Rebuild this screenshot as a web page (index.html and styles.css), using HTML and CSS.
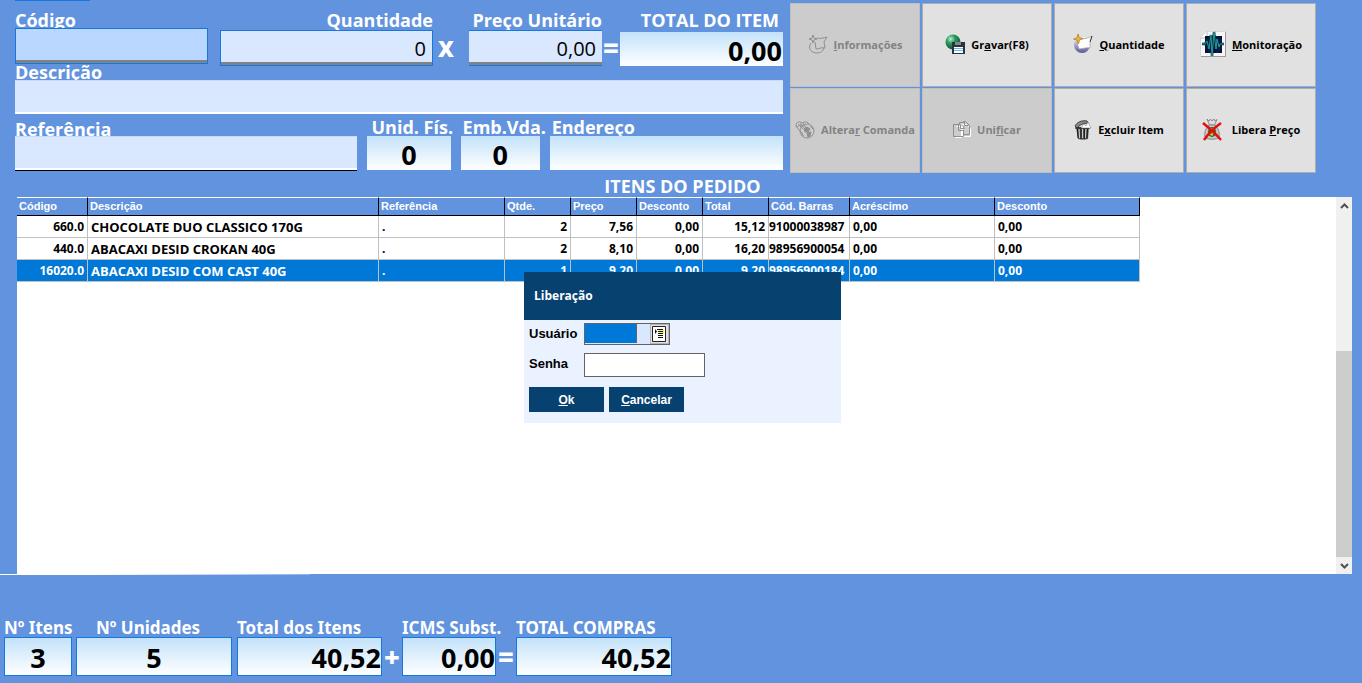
FILE: index.html
```html
<!DOCTYPE html>
<html lang="pt-BR">
<head>
<meta charset="utf-8">
<title>Itens do Pedido</title>
<link rel="stylesheet" href="styles.css">
</head>
<body>
<div class="app">
  <header class="top">
    <form class="entry">
      <div class="row row-values">
        <div class="field">
          <label class="label label-short" for="codigo">Código</label>
          <input class="box box-edit box-active" id="codigo" type="text">
        </div>
        <div class="field push">
          <label class="label label-end" for="qtd">Quantidade</label>
          <input class="box box-edit" id="qtd" type="text" value="0">
        </div>
        <span class="sign">X</span>
        <div class="field">
          <label class="label label-end" for="preco">Preço Unitário</label>
          <input class="box box-edit box-open" id="preco" type="text" value="0,00">
        </div>
        <span class="sign sign-eq">=</span>
        <div class="field">
          <label class="label label-tall label-end label-inset" for="total-item">TOTAL DO ITEM</label>
          <input class="box box-total" id="total-item" type="text" value="0,00" readonly>
        </div>
      </div>
      <div class="field">
        <label class="label label-tight" for="descricao">Descrição</label>
        <input class="box box-plain" id="descricao" type="text">
      </div>
      <div class="row row-info">
        <div class="field">
          <label class="label label-info label-low" for="referencia">Referência</label>
          <input class="box box-plain box-shadow" id="referencia" type="text">
        </div>
        <div class="field">
          <label class="label label-info label-start" for="unid">Unid. Fís.</label>
          <input class="box box-total box-center" id="unid" type="text" value="0" readonly>
        </div>
        <div class="field">
          <label class="label label-info" for="emb">Emb.Vda.</label>
          <input class="box box-total box-center" id="emb" type="text" value="0" readonly>
        </div>
        <div class="field">
          <label class="label label-info" for="endereco">Endereço</label>
          <input class="box box-total" id="endereco" type="text" readonly>
        </div>
      </div>
    </form>
    <div class="tools">
      <button class="tool" type="button" disabled>
        <svg class="icon" width="20" height="20" viewBox="0 0 20 20" fill="none" stroke="#8f8f8f"><path d="M5 1l1 3 3 1-3 1-1 3-1-3-3-1 3-1zM9 4c3 1 6 0 10-1l-3 5 1 6c-4-1-6 1-9 1L7 8M3 9c-4 6 1 10 6 10 4 0 6-2 7-5"/></svg>
        <span><u>I</u>nformações</span>
      </button>
      <button class="tool" type="button">
        <svg class="icon" width="20" height="20" viewBox="0 0 20 20"><defs><radialGradient id="globe" cx=".35" cy=".3" r=".7"><stop offset="0" stop-color="#b9f3cf"/><stop offset=".4" stop-color="#2f9a62"/><stop offset="1" stop-color="#0a5a32"/></radialGradient></defs><circle cx="8" cy="8" r="7.5" fill="url(#globe)"/><path d="M7 8h13v12H7z" fill="#2b333d"/><path d="M10 8h6v3h-6z" fill="#7b8794"/><path d="M9 13h9v6H9z" fill="#fff"/><path d="M9 14.500h9M9 16.500h9" stroke="#6fb5e8"/></svg>
        <span>Gr<u>a</u>var(F8)</span>
      </button>
      <button class="tool" type="button">
        <svg class="icon" width="20" height="20" viewBox="0 0 20 20"><defs><linearGradient id="orb" x1="0" x2="0" y1="0" y2="1"><stop offset="0" stop-color="#f4f4ff"/><stop offset="1" stop-color="#5a5894"/></linearGradient></defs><circle cx="9" cy="11" r="8" fill="url(#orb)"/><path d="M6 5c4 0 8 0 13-3l-2 6 0 6c-4-1-7 1-11 1L4 9z" fill="#fff" stroke="#8b8b9c" stroke-width=".6"/><path d="M19 2l-2 6" stroke="#333"/><path d="M5 0l1.300 3.500L10 4.500 6.500 6 5.500 10 4 6.300.500 5 4 3.700z" fill="#f1b632" stroke="#a8781c" stroke-width=".7"/></svg>
        <span><u>Q</u>uantidade</span>
      </button>
      <button class="tool" type="button">
        <svg class="icon" width="26" height="26" viewBox="0 0 26 26"><path d="M7 .500h18.500v25H.500V7z" fill="#f6f6f6" stroke="#d6d6d6"/><path d="M.500 7H7V.500" fill="#fff" stroke="#bbb"/><path d="M25.500 1v24.500H1" fill="none" stroke="#9a9a9a"/><path d="M5 5h17v17H5z" fill="#07113f"/><path d="M5 9h17M5 13h17M5 17h17M9 5v17M13 5v17M17 5v17" stroke="#1c2c68" stroke-width=".5"/><path d="M2 13h3l2-3 2 8 2-14 1 21 2-24 2 17 1-10 2 8 1-3h4" fill="none" stroke="#0b2a33" stroke-width="2.500"/><path d="M2 13h3l2-3 2 8 2-14 1 21 2-24 2 17 1-10 2 8 1-3h4" fill="none" stroke="#1f9aa3" stroke-width="1"/></svg>
        <span><u>M</u>onitoração</span>
      </button>
      <button class="tool" type="button" disabled>
        <svg class="icon" width="20" height="18" viewBox="0 0 20 18" fill="none" stroke="#8f8f8f"><circle cx="12" cy="10" r="7"/><path d="M1 4c0-3 4-4 6-2 3-2 6-1 7 1M1 4c0 3 3 4 4 6l3 3M3 3l5 5M5 2l5 6M8 2l3 5M2 6c2-2 4-2 6-1"/><path d="M9 8l3-2 3 2-2 3-3 0zM12 12l4-1-1 4-2 1zM15 5l3 3M6 13l3 2" fill="#8f8f8f"/></svg>
        <span>Altera<u>r</u> Comanda</span>
      </button>
      <button class="tool" type="button" disabled>
        <svg class="icon" width="18" height="17" viewBox="0 0 18 17" fill="none"><path d="M2.500 4.500h5v11h-6M8.500 2.500h4l4 4v8h-8z" stroke="#fff" transform="translate(1 1)"/><path d="M.500 3.500h6v-2h4v-1h2l4 4v9h-6v2h-10zM5.500 3.500v6h5M7.500 3.500v4h4l-2-3M11.500.500v4h4M10.500 9v5" stroke="#8f8f8f"/></svg>
        <span>Uni<u>f</u>icar</span>
      </button>
      <button class="tool" type="button">
        <svg class="icon" width="18" height="20" viewBox="0 0 18 20"><path d="M2 7h13l-1 12c-3 1-7 1-10 0z" fill="#555"/><path d="M5 9l.600 9M8.500 9v9M12 9l-.600 9" stroke="#ccc" stroke-width="1.200"/><path d="M3.500 9l.600 9M7 9v10M10.300 9v10M13.500 9l-.600 9" stroke="#111"/><path d="M1 8h15" stroke="#222" stroke-width="1.200"/><path d="M1 6C3 2 8 0 13 1l1 2C10 3 5 5 3 8z" fill="#8a8a8a" stroke="#222" stroke-width=".8"/><path d="M7 8l3-4 2 2 2-4 3 6z" fill="#fff" stroke="#777" stroke-width=".5"/></svg>
        <span>E<u>x</u>cluir Item</span>
      </button>
      <button class="tool tool-wide" type="button">
        <svg class="icon" width="20" height="22" viewBox="0 0 20 22"><path d="M5 0l2 2 1.500-2L10 2l2-2 1 2 2-1.500L12.500 6h-5z" fill="#ddd" stroke="#777" stroke-width=".8"/><path d="M7 6h6c3 3 5 7 4 12-1 3-13 3-14 0C2 13 4 9 7 6z" fill="#c3c6c3" stroke="#888"/><ellipse cx="10" cy="13" rx="4" ry="5" fill="#2d6c2b"/><path d="M11.500 10.500c-3-1-4 1.500-1.500 2.500s1 3.500-2 2.500M10 9v8" stroke="#d8e43a" fill="none"/><path d="M1 4c5 4 12 10 18 17M19 4C12 9 6 15 2 21" stroke="#e80c0c" stroke-width="2.400" fill="none"/></svg>
        <span>Libera <u>P</u>reço</span>
      </button>
    </div>
  </header>

  <h1 class="title">ITENS DO PEDIDO</h1>

  <main class="list">
    <div class="list-body">
      <table class="items">
        <colgroup><col class="c-cod"><col class="c-desc"><col class="c-ref"><col class="c-num"><col class="c-num"><col class="c-num"><col class="c-num"><col class="c-bar"><col class="c-ext"><col class="c-ext"></colgroup>
        <thead>
          <tr><th>Código</th><th>Descrição</th><th>Referência</th><th>Qtde.</th><th>Preço</th><th>Desconto</th><th>Total</th><th>Cód. Barras</th><th>Acréscimo</th><th>Desconto</th></tr>
        </thead>
        <tbody>
          <tr><td class="num">660.0</td><td class="name">CHOCOLATE DUO CLASSICO 170G</td><td>.</td><td class="num">2</td><td class="num">7,56</td><td class="num">0,00</td><td class="num">15,12</td><td class="bar">91000038987</td><td>0,00</td><td>0,00</td></tr>
          <tr><td class="num">440.0</td><td class="name">ABACAXI DESID CROKAN 40G</td><td>.</td><td class="num">2</td><td class="num">8,10</td><td class="num">0,00</td><td class="num">16,20</td><td class="bar">98956900054</td><td>0,00</td><td>0,00</td></tr>
          <tr class="selected"><td class="num">16020.0</td><td class="name">ABACAXI DESID COM CAST 40G</td><td>.</td><td class="num">1</td><td class="num">9,20</td><td class="num">0,00</td><td class="num">9,20</td><td class="bar">98956900184</td><td>0,00</td><td>0,00</td></tr>
        </tbody>
      </table>
    </div>
    <div class="scroll">
      <button class="scroll-btn" type="button" aria-label="Subir"><svg width="9" height="6" viewBox="0 0 9 6" fill="none" stroke="#505050" stroke-width="2"><path d="M1 5l3.500-3.500L8 5"/></svg></button>
      <div class="scroll-track"><div class="scroll-thumb"></div></div>
      <button class="scroll-btn" type="button" aria-label="Descer"><svg width="9" height="6" viewBox="0 0 9 6" fill="none" stroke="#505050" stroke-width="2"><path d="M1 1l3.500 3.500L8 1"/></svg></button>
    </div>
  </main>

  <footer class="totals">
    <div class="sum sum-s">
      <label class="sum-label" for="n-itens">Nº Itens</label>
      <input class="sum-box box-center" id="n-itens" type="text" value="3" readonly>
    </div>
    <div class="sum sum-l">
      <label class="sum-label sum-label-mid" for="n-unid">Nº Unidades</label>
      <input class="sum-box box-center" id="n-unid" type="text" value="5" readonly>
    </div>
    <div class="sum sum-m">
      <label class="sum-label" for="t-itens">Total dos Itens</label>
      <input class="sum-box" id="t-itens" type="text" value="40,52" readonly>
    </div>
    <span class="sum-sign">+</span>
    <div class="sum sum-n">
      <label class="sum-label" for="icms">ICMS Subst.</label>
      <input class="sum-box" id="icms" type="text" value="0,00" readonly>
    </div>
    <span class="sum-sign">=</span>
    <div class="sum sum-l">
      <label class="sum-label" for="t-compras">TOTAL COMPRAS</label>
      <input class="sum-box" id="t-compras" type="text" value="40,52" readonly>
    </div>
  </footer>

  <form class="dialog" role="dialog" aria-labelledby="dlg-title">
    <h2 class="dialog-title" id="dlg-title">Liberação</h2>
    <div class="dialog-body">
      <div class="dialog-row">
        <label class="dialog-label" for="usuario">Usuário</label>
        <div class="picker">
          <input class="picker-input" id="usuario" type="text">
          <button class="picker-btn" type="button" aria-label="Procurar usuário"><svg width="15" height="17" viewBox="0 0 15 17"><path d="M.500.500h13v15H.500z" fill="#fff" stroke="#222"/><path d="M7 3h5v5H7z" fill="#fff36a"/><path d="M5 3.500h6M6 5.500h5M6 7.500h5M6 9.500h5M6 11.500h5" stroke="#111"/><path d="M3 3v5l2-2.500z" fill="#111"/></svg></button>
        </div>
      </div>
      <div class="dialog-row">
        <label class="dialog-label" for="senha">Senha</label>
        <input class="password" id="senha" type="password">
      </div>
      <div class="dialog-actions">
        <button class="action" type="button"><u>O</u>k</button>
        <button class="action" type="button"><u>C</u>ancelar</button>
      </div>
    </div>
  </form>
</div>
</body>
</html>
```
FILE: styles.css
```css
* { box-sizing: border-box; }

body {
  margin: 0;
  background: #6293de;
  color: #000;
  font-family: "Open Sans", "Noto Sans", sans-serif;
}

input, button { font: inherit; margin: 0; border-radius: 0; }
input { min-width: 0; width: 100%; outline: none; }

.app {
  position: relative;
  display: flex;
  flex-direction: column;
  min-height: 100vh;
}

/* entry fields */
.top {
  display: flex;
  gap: 7px;
  padding: 0 46px 0 15px;
}
.top::before {
  content: "";
  position: absolute;
  top: 0;
  left: 15px;
  width: 75px;
  height: 1px;
  background: #1478e0;
}
.entry { flex: 1; min-width: 0; padding-top: 10px; }
.row { display: grid; align-items: start; }
.row-values {
  grid-template-columns: minmax(0, 193fr) minmax(0, 225fr) 36px minmax(0, 133fr) 18px minmax(0, 163fr);
}
.push { padding-left: 12px; }
.row-info {
  grid-template-columns: minmax(0, 342fr) minmax(0, 83fr) minmax(0, 79fr) minmax(0, 233fr);
  column-gap: 10px;
}
.field { display: flex; flex-direction: column; min-width: 0; }
.label {
  height: 20px;
  color: #fff;
  font-size: 18px;
  font-weight: 700;
  line-height: 20px;
  white-space: nowrap;
}
.label-short { height: 18px; }
.label-tall { height: 22px; }
.label-tight { height: 14px; line-height: 12px; }
.label-end { text-align: right; }
.label-inset { padding-right: 4px; }
.label-info { height: 22px; line-height: 26px; padding-left: 2px; }
.label-low { line-height: 31px; padding-left: 0; }
.label-start { padding-left: 4px; }

.box { height: 36px; border: 0; padding: 0 6px; }
.box-edit {
  border: 1px solid #1478e0;
  background: linear-gradient(to top, #7d8488 3px, #d9e7ff 3px);
  font-size: 20px;
  text-align: right;
}
.box-active { background: linear-gradient(to top, #7d8488 3px, #b9d7ff 3px); }
.box-open { border-left: 0; border-right: 0; }
.box-plain {
  height: 34px;
  background: #d9e7ff;
  border-top: 1px solid #c3dcf8;
  border-bottom: 2px solid #fff;
}
.box-shadow { box-shadow: 0 1px 0 #000; }
.box-total {
  height: 34px;
  padding: 2px 1px 0;
  background: linear-gradient(#c3e2fa, #fff);
  font-size: 27px;
  font-weight: 700;
  text-align: right;
}
.box-total.box-center, .sum-box.box-center { text-align: center; }

.sign {
  padding: 24px 10px 0 0;
  color: #fff;
  font-size: 22px;
  font-weight: 800;
  line-height: 28px;
  text-align: center;
}
.sign-eq { padding-right: 0; font-size: 27px; }

/* tool buttons */
.tools {
  display: grid;
  grid-template-columns: repeat(4, 130px);
  grid-template-rows: 84px 85px;
  gap: 1px 2px;
  padding-top: 3px;
}
.tool {
  display: flex;
  align-items: center;
  justify-content: center;
  gap: 6px;
  padding: 0 0 2px;
  border: 1px solid #adadad;
  background: #e1e1e1;
  color: #000;
  font-size: 11px;
  font-weight: 700;
  white-space: nowrap;
}
.tool:disabled { background: #ccc; border-color: #bfbfbf; color: #838383; }
.tool-wide { gap: 10px; }
.icon { flex: none; }

/* item list */
.title {
  margin: 0;
  padding: 3px 0 0 3px;
  color: #fff;
  font-size: 18px;
  font-weight: 700;
  line-height: 21px;
  text-align: center;
}
.list {
  flex: 1;
  display: flex;
  margin: 0 10px 0 17px;
  background: #fff;
}
.list-body { flex: 1; min-width: 0; overflow: hidden; }
.items {
  width: 1123px;
  border-collapse: separate;
  border-spacing: 0;
  table-layout: fixed;
  font-size: 12px;
  font-weight: 700;
}
.c-cod { width: 71px; }
.c-desc { width: 291px; }
.c-ref { width: 126px; }
.c-num { width: 66px; }
.c-bar { width: 81px; }
.c-ext { width: 145px; }
.items th {
  height: 19px;
  padding: 0 2px;
  border-top: 1px solid #fff;
  border-right: 1px solid #000;
  border-bottom: 1px solid #000;
  background: #6293de;
  color: #fff;
  font-family: "Liberation Sans", Arial, sans-serif;
  font-size: 11px;
  line-height: 17px;
  text-align: left;
}
.items td {
  height: 22px;
  padding: 1px 3px 0;
  border-right: 1px solid #c0c0c0;
  border-bottom: 1px solid #c0c0c0;
  line-height: 20px;
  white-space: nowrap;
}
.items .name { font-size: 13px; }
.items .num { text-align: right; }
.items .bar { padding: 1px 0 0; }
.selected { background: #0078d7; color: #fff; }

.scroll { display: flex; flex-direction: column; width: 16px; background: #f0f0f0; }
.scroll-btn {
  display: flex;
  align-items: center;
  justify-content: center;
  height: 17px;
  padding: 0;
  border: 0;
  background: #f0f0f0;
}
.scroll-track { flex: 1; display: flex; flex-direction: column; justify-content: flex-end; }
.scroll-thumb { height: 60%; background: #cdcdcd; }

/* order totals */
.totals {
  position: relative;
  display: flex;
  align-items: flex-end;
  height: 109px;
  padding: 0 4px 7px;
}
.totals::before {
  content: "";
  position: absolute;
  top: 0;
  left: 0;
  width: 310px;
  height: 1px;
  background: linear-gradient(to right, #fff 30%, #8fb2e8);
}
.sum { display: flex; flex-direction: column; }
.sum-s { width: 68px; margin-right: 4px; }
.sum-l { width: 156px; }
.sum-m { width: 145px; margin-left: 5px; }
.sum-n { width: 94px; }
.sum-label {
  color: #fff;
  font-family: "Noto Sans", sans-serif;
  font-size: 17px;
  font-weight: 700;
  line-height: 18px;
  white-space: nowrap;
}
.sum-label-mid { padding-left: 20px; }
.sum-box {
  height: 39px;
  padding: 1px 0 0;
  border: 1px solid #1478e0;
  background: linear-gradient(#c3e2fa, #fff);
  font-size: 27px;
  font-weight: 700;
  text-align: right;
}
.sum-sign {
  width: 20px;
  color: #fff;
  font-size: 27px;
  font-weight: 800;
  line-height: 38px;
  text-align: center;
}

/* release dialog */
.dialog {
  position: absolute;
  top: 272px;
  left: calc(50% - 157px);
  width: 317px;
  background: #eaf2ff;
}
.dialog-title {
  margin: 0;
  padding: 0 10px;
  background: #074170;
  color: #fff;
  font-size: 12px;
  font-weight: 700;
  line-height: 48px;
}
.dialog-body {
  display: flex;
  flex-direction: column;
  gap: 8px;
  padding: 3px 5px 11px;
}
.dialog-row { display: flex; align-items: flex-start; }
.dialog-label {
  width: 55px;
  font-family: "Liberation Sans", Arial, sans-serif;
  font-size: 13px;
  font-weight: 700;
  line-height: 22px;
}
.picker {
  display: flex;
  justify-content: space-between;
  width: 86px;
  height: 22px;
  border: 1px solid #646464;
  background: #d9e7ff;
}
.picker-input {
  width: 52px;
  height: 19px;
  padding: 0;
  border: 0;
  border-right: 1px solid #646464;
  background: #0078d7;
}
.picker-btn {
  display: flex;
  align-items: center;
  justify-content: center;
  width: 19px;
  padding: 0;
  border: 1px solid #b4b4b4;
  background: #e1e1e1;
}
.password { width: 121px; height: 24px; padding: 0 3px; border: 1px solid #646464; background: #fff; }
.dialog-actions { display: flex; gap: 5px; padding-top: 2px; }
.action {
  width: 75px;
  height: 25px;
  padding: 0;
  border: 0;
  background: #074170;
  color: #fff;
  font-family: "Liberation Sans", Arial, sans-serif;
  font-size: 12px;
  font-weight: 700;
}
```
